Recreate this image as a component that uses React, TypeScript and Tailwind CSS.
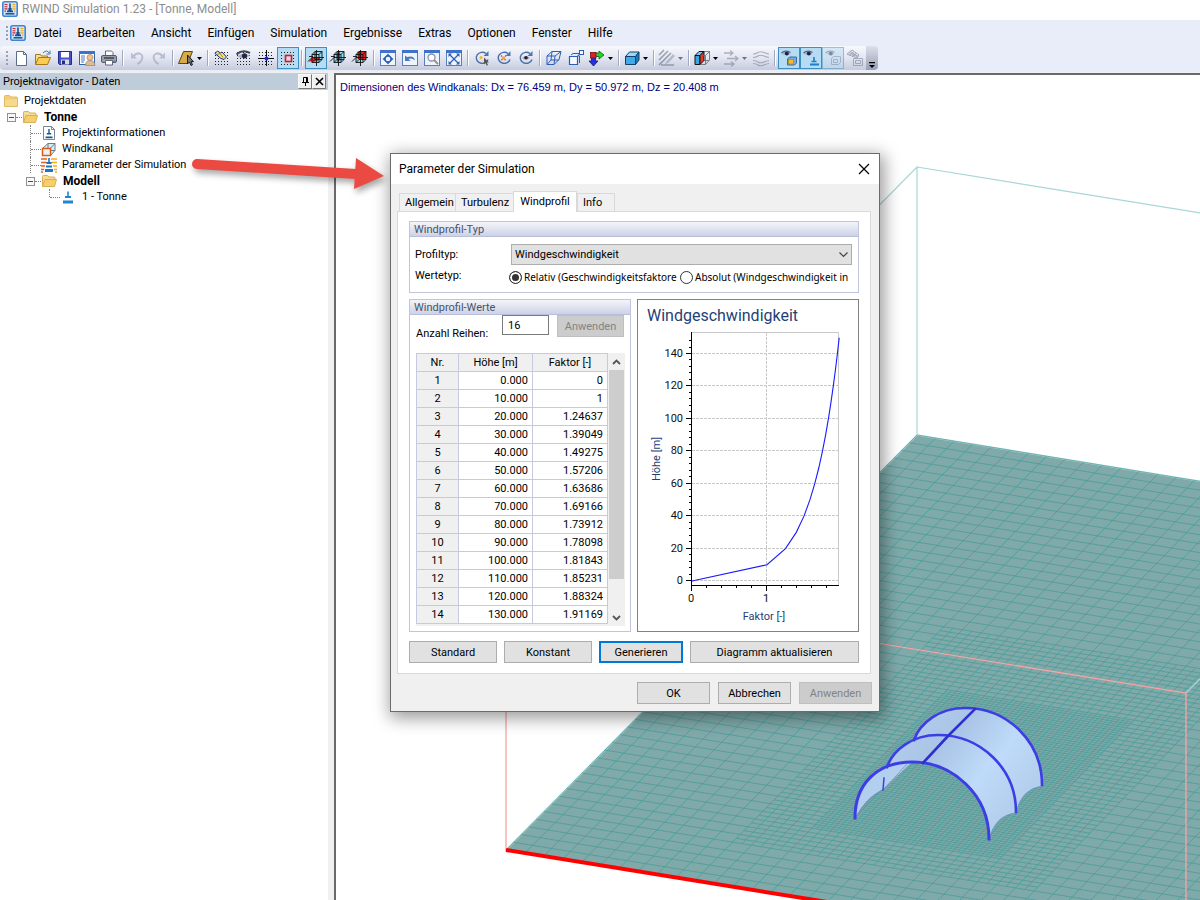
import React, { useState } from "react";
import clsx from "clsx";

const MENU = [
  "Datei",
  "Bearbeiten",
  "Ansicht",
  "Einfügen",
  "Simulation",
  "Ergebnisse",
  "Extras",
  "Optionen",
  "Fenster",
  "Hilfe",
];

const PROFILE: { height: number; factor: number }[] = [
  { height: 0, factor: 0 },
  { height: 10, factor: 1 },
  { height: 20, factor: 1.24637 },
  { height: 30, factor: 1.39049 },
  { height: 40, factor: 1.49275 },
  { height: 50, factor: 1.57206 },
  { height: 60, factor: 1.63686 },
  { height: 70, factor: 1.69166 },
  { height: 80, factor: 1.73912 },
  { height: 90, factor: 1.78098 },
  { height: 100, factor: 1.81843 },
  { height: 110, factor: 1.85231 },
  { height: 120, factor: 1.88324 },
  { height: 130, factor: 1.91169 },
  { height: 140, factor: 1.93807 },
  { height: 150, factor: 1.96265 },
];

const VISIBLE_ROWS = 14;

/* ---------- icons ---------- */

type IconProps = { children: React.ReactNode; className?: string };

const Icon = ({ children, className }: IconProps) => (
  <svg
    viewBox="0 0 18 18"
    fill="none"
    aria-hidden="true"
    className={clsx("h-[18px] w-[18px] shrink-0", className)}
  >
    {children}
  </svg>
);

const AppLogo = () => (
  <svg viewBox="0 0 16 16" fill="none" aria-hidden="true" className="h-4 w-4 shrink-0">
    <rect x=".8" y=".8" width="14.400" height="14.400" rx="2" fill="#cfe6fa" stroke="#3f86d2" strokeWidth="1.600" />
    <path d="M2.500 3.500h3M2.500 5.700h3M2.500 7.900h3M2.500 10.100h1.500" stroke="#d8232a" strokeWidth="1.100" />
    <path d="M10.500 3.500h3M10.500 5.700h3M10.500 7.900h3M12 10.100h1.500" stroke="#f0a81c" strokeWidth="1.100" />
    <path d="M7.200 2.500h1.600v4.500h.8v2.500h1.400v1.800h-6v-1.800h1.400v-2.500h.8z" fill="#1b4f8c" />
    <path d="M3.500 12.800h9" stroke="#1b4f8c" strokeWidth="1.500" />
  </svg>
);

const FolderClosed = () => (
  <svg viewBox="0 0 16 16" className="h-4 w-4 shrink-0" aria-hidden="true">
    <path d="M1.500 3.500q0-1 1-1h4l1.500 1.500h5.500q1 0 1 1v8.500h-13z" fill="#f0cf76" stroke="#e0bb62" />
    <path d="M2 6.500h12v6.500h-12z" fill="#f5d98c" />
  </svg>
);

const FolderOpen = () => (
  <svg viewBox="0 0 16 16" className="h-4 w-4 shrink-0" aria-hidden="true">
    <path d="M1.500 13.500v-10q0-1 1-1h4l1.500 1.500h5q1 0 1 1v2" fill="#f3dc96" stroke="#d8b055" />
    <path d="M1.500 13.500l2.500-7h11.500l-2 7z" fill="#f6cf6a" stroke="#d8b055" />
  </svg>
);

const Dots = () => (
  <path d="M2 3.500h15M2 6.500h15M2 9.500h15M2 12.500h15M2 15.500h15" stroke="#222" strokeDasharray="1 2" />
);

const CubeCross = ({ part }: { part: "floor" | "side" | "back" }) => (
  <Icon>
    <path d="M5 5.500l3-3h7v8l-3 3h-7z" fill="#8fdcf5" />
    {part === "floor" && <path d="M1.500 12.500l4-4h8l-3.500 4z" fill="#ee1c1c" />}
    {part === "side" && <path d="M8 4.500l3-2.500v9l-3 3z" fill="#ee1c1c" />}
    {part === "back" && <path d="M6.500 2.500h8.500v7.500h-8.500z" fill="#ee1c1c" />}
    <path
      d="M5 5.500l3-3h7v8l-3 3h-7zM5 5.500h7v8M12 5.500l3-3M8 2.500v8h7M8 10.500l-3 3"
      stroke="#111"
      strokeWidth=".9"
    />
    <path d="M1 12.500l4-4h12M9.500 1v16M2 7.500h4" stroke="#111" strokeWidth=".9" />
  </Icon>
);

const WindowFrame = ({ children }: { children: React.ReactNode }) => (
  <Icon>
    <rect x="1.500" y="1.500" width="15" height="15" fill="#eef4fd" stroke="#5a7fb8" />
    <path d="M1 2.500h16" stroke="#3f72c8" strokeWidth="3" />
    {children}
  </Icon>
);

const Rotate = ({ children }: { children: React.ReactNode }) => (
  <Icon>
    <path d="M13 4.500a6 5.500 0 1 0 2 6" stroke="#4a6fa8" strokeWidth="1.400" />
    <path d="M15.500 2v5h-5z" fill="#4a76b8" />
    {children}
  </Icon>
);

const Eye = () => (
  <>
    <path d="M1.500 5q4.500-4 9.500 0q-4.500 2-9.500 0z" fill="#aeb6cc" />
    <circle cx="6.800" cy="4.600" r="2" fill="#1d2350" />
    <path d="M1.500 4q4-3.500 9-.5" stroke="#5a627a" strokeWidth="1.200" />
  </>
);

/* ---------- toolbar ---------- */

type ToolProps = {
  label: string;
  active?: boolean;
  disabled?: boolean;
  menu?: boolean;
  children: React.ReactNode;
};

const Tool = ({ label, active, disabled, menu, children }: ToolProps) => (
  <button
    type="button"
    aria-label={label}
    title={label}
    disabled={disabled}
    className={clsx(
      "flex h-[22px] shrink-0 items-center",
      menu ? "w-[29px] justify-start pl-px" : "w-[22px] justify-center",
      active && "border border-[#3c8fc0] bg-[#b5dcf2]",
      disabled && "opacity-50"
    )}
  >
    {children}
    {menu && (
      <svg viewBox="0 0 5 3" className="ml-0.5 h-[3px] w-[5px] shrink-0" aria-hidden="true">
        <path d="M0 0h5l-2.500 3z" fill="#000" />
      </svg>
    )}
  </button>
);

const Separator = () => (
  <span className="mx-0.5 h-4 w-0.5 shrink-0 border-r border-white bg-[#a3a9bc]" />
);

const Grip = () => (
  <span className="ml-[6px] mr-[2px] h-[14px] w-0.5 shrink-0 bg-[repeating-linear-gradient(#9aa0b4_0_2px,transparent_2px_4px)]" />
);

const Toolbar = () => (
  <div className="flex h-[26px] items-start bg-[#e9ecf9]">
    <div className="flex h-6 items-center rounded-l bg-linear-to-b from-[#f7f8fd] via-[#e3e6f2] to-[#c6cbdd]">
      <Grip />
      <Tool label="Neu">
        <Icon>
          <path d="M4.500 2.500h7l3 3v11h-10z" fill="#fff" stroke="#5b6c88" />
          <path d="M11.500 2.500v3h3" stroke="#5b6c88" />
        </Icon>
      </Tool>
      <Tool label="Öffnen">
        <Icon>
          <path d="M1.500 15V5.500h5l1 1.500h6v2" fill="#f8e08c" stroke="#a5781c" />
          <path d="M1.500 15.500l3-7h12l-3 7z" fill="#f9cd52" stroke="#a5781c" />
          <path d="M9 4q4-4 6 0M16 1.500v3.500h-3.500" stroke="#48709f" />
        </Icon>
      </Tool>
      <Tool label="Speichern">
        <Icon>
          <path d="M2.500 2.500h13v13h-12l-1-1z" fill="#4653c4" stroke="#242c86" />
          <rect x="5" y="3" width="8" height="5.500" fill="#fff" />
          <rect x="5" y="10.500" width="8" height="5" fill="#d5d9ea" />
          <rect x="6" y="11.500" width="3" height="3.500" fill="#242c86" />
        </Icon>
      </Tool>
      <Tool label="Projekt">
        <Icon>
          <rect x="1.500" y="2.500" width="15" height="13" fill="#fff" stroke="#3464a8" />
          <path d="M1 3.500h16" stroke="#3873cf" strokeWidth="3" />
          <path d="M3 7h4M3 9h4M3 11h4M3 13h3" stroke="#4a7bc1" />
          <circle cx="12" cy="8.500" r="3" fill="#f3c28c" stroke="#b67b3a" strokeWidth=".7" />
          <path d="M7.500 16.500q0-5 4.500-5t5 5z" fill="#e6b98a" stroke="#8a8f9c" strokeWidth=".8" />
        </Icon>
      </Tool>
      <Tool label="Drucken">
        <Icon>
          <path d="M5.500 7V2h6l1.500 1.500V7" fill="#fff" stroke="#667" />
          <rect x="1.500" y="6.500" width="15" height="7" rx="1.500" fill="#9aa0aa" stroke="#555c68" />
          <path d="M4 9h10" stroke="#3d434e" strokeWidth="1.500" />
          <path d="M5.500 11.500h7v4.500h-7z" fill="#fff" stroke="#667" />
          <path d="M13 12.500h2.500" stroke="#3b8fe0" strokeWidth="1.500" />
        </Icon>
      </Tool>
      <Separator />
      <Tool label="Rückgängig" disabled>
        <Icon>
          <path d="M5 7.500q4-4.500 7.500-2.500t.5 7q-1.500 2-3.500 3" stroke="#8c95ab" strokeWidth="2" />
          <path d="M3 3.500v6h6z" fill="#8c95ab" />
        </Icon>
      </Tool>
      <Tool label="Wiederholen" disabled>
        <Icon>
          <path d="M13 7.500q-4-4.500-7.500-2.500t-.5 7q1.500 2 3.500 3" stroke="#8c95ab" strokeWidth="2" />
          <path d="M15 3.500v6h-6z" fill="#8c95ab" />
        </Icon>
      </Tool>
      <Separator />
      <Tool label="Auswahl" menu>
        <Icon>
          <path d="M1.500 14.500l5-12h9l-5 12z" fill="#d8ab45" stroke="#5e4513" />
          <path d="M10.500 6v9l2-2 1.500 3.500 1.500-.8-1.500-3h2.500z" fill="#777" stroke="#111" strokeWidth=".9" />
        </Icon>
      </Tool>
      <Separator />
      <Tool label="Arbeitsebene">
        <Icon>
          <Dots />
          <path d="M2 4.500l2.500-2.500 3 2 1.500-1 4.500 5-2.500 2.500-3-1-3-2.500z" fill="#f3e27a" stroke="#1c2e8c" />
          <path d="M4 5.500l3-1 3 4" stroke="#a5901c" />
        </Icon>
      </Tool>
      <Tool label="Raster anzeigen">
        <Icon>
          <Dots />
          <path d="M2 7.500q5-5 13-1q-6 5-13 1z" fill="#a9aebb" />
          <circle cx="9.500" cy="6.800" r="2.600" fill="#20254a" />
          <path d="M1.500 5.500q6-5.500 13.500-1.500" stroke="#444a58" strokeWidth="2" />
        </Icon>
      </Tool>
      <Tool label="Ursprung">
        <Icon>
          <Dots />
          <path d="M9.500 1v16M1 9.500h16" stroke="#111" />
          <circle cx="9.500" cy="9.500" r="2" fill="#1726ee" />
        </Icon>
      </Tool>
      <Tool label="Fang" active>
        <Icon>
          <Dots />
          <rect x="5" y="5" width="9" height="9" fill="#b5dcf2" />
          <rect x="6.500" y="6.500" width="6" height="6" fill="#d9d9f0" stroke="#ee1111" strokeWidth="1.600" />
        </Icon>
      </Tool>
      <Separator />
      <Tool label="Ebene XY" active>
        <CubeCross part="floor" />
      </Tool>
      <Tool label="Ebene YZ">
        <CubeCross part="side" />
      </Tool>
      <Tool label="Ebene XZ">
        <CubeCross part="back" />
      </Tool>
      <Separator />
      <Tool label="Ansicht verschieben">
        <WindowFrame>
          <circle cx="9" cy="10" r="3" stroke="#2c5fb4" strokeWidth="1.400" />
          <path d="M9 4.500l2 2.500h-4zM9 15.500l2-2.500h-4zM3.500 10l2.500-2v4zM14.500 10l-2.500-2v4z" fill="#2c5fb4" />
        </WindowFrame>
      </Tool>
      <Tool label="Vorherige Ansicht">
        <WindowFrame>
          <path d="M4 6.500v5.500h5.500l-2-2q3.500-1.500 6.500 1.500q-1-5.500-8-3.500z" fill="#4c79c0" />
        </WindowFrame>
      </Tool>
      <Tool label="Zoom">
        <WindowFrame>
          <circle cx="8.500" cy="8.500" r="3.500" fill="#fff" stroke="#8393ab" strokeWidth="1.300" />
          <path d="M11 11l4 4" stroke="#9a8f7a" strokeWidth="1.800" />
        </WindowFrame>
      </Tool>
      <Tool label="Alles anzeigen">
        <WindowFrame>
          <path d="M5 6l8 8M13 6l-8 8" stroke="#2c5fb4" strokeWidth="1.200" />
          <path d="M3.500 4.500h3.500l-3.500 3.500zM14.500 4.500h-3.500l3.500 3.500zM3.500 15.500h3.500l-3.500-3.500zM14.500 15.500h-3.500l3.500-3.500z" fill="#2c5fb4" />
        </WindowFrame>
      </Tool>
      <Separator />
      <Tool label="Drehen">
        <Rotate>
          <circle cx="8" cy="8.500" r="1.500" fill="#f2b91a" />
          <path d="M11 8.500v7l1.600-1.400 1.200 2.600 1.200-.6-1.200-2.600h2.200z" fill="#555" />
        </Rotate>
      </Tool>
      <Tool label="Um Punkt drehen">
        <Rotate>
          <path d="M6 6.500l5 5M11 6.500l-5 5" stroke="#e33" strokeWidth="1.200" strokeDasharray="1.500 1" />
          <circle cx="8.500" cy="9" r="1.500" fill="#f2a31a" />
        </Rotate>
      </Tool>
      <Tool label="Blickwinkel">
        <Rotate>
          <path d="M5 9q4-4 8 0q-4 3-8 0z" fill="#a4abba" />
          <circle cx="9" cy="8.800" r="1.800" fill="#223" />
        </Rotate>
      </Tool>
      <Separator />
      <Tool label="Isometrie">
        <Icon>
          <path d="M2 7l5-4.500h9l-2 8-5 5H2zM2 7h8l6-4.500M10 7l-1 8.500M7 2.500l-1 8.500-4 4.500M6 11h8" stroke="#2c5fb4" />
        </Icon>
      </Tool>
      <Tool label="Perspektive">
        <Icon>
          <path d="M2.500 7.500h8v8h-8zM10.500 7.500l3.500-3.500" fill="#f5f8fe" stroke="#2c5fb4" strokeWidth="1.200" />
          <rect x="12.500" y="1.500" width="4" height="4" fill="#f5f8fe" stroke="#2c5fb4" />
          <path d="M4 6l2-1.500h6M12.500 14v-7" stroke="#2c5fb4" />
        </Icon>
      </Tool>
      <Tool label="Achsen" menu>
        <Icon>
          <path d="M6 4h5v-2l5 4-5 4v-2.500h-5z" fill="#22d522" stroke="#0b5f0b" strokeWidth=".8" />
          <path d="M3.500 7h4v5h2.500l-4.500 5-4.500-5h2.500z" fill="#2330e8" stroke="#10156e" strokeWidth=".8" />
          <rect x="2.500" y="3.500" width="5.500" height="5.500" fill="#e02020" stroke="#701010" strokeWidth=".8" />
        </Icon>
      </Tool>
      <Separator />
      <Tool label="Volumen" menu>
        <Icon>
          <path d="M2.500 7.500l4-4.500h9.500l-3.500 4.500z" fill="#9bd8f8" stroke="#123f66" />
          <path d="M12.500 7.500l3.500-4.500v8l-3.500 4.500z" fill="#1d79b8" stroke="#123f66" />
          <path d="M2.500 7.500h10v8h-10z" fill="#40aae8" stroke="#123f66" />
        </Icon>
      </Tool>
      <Separator />
      <Tool label="Schraffur" menu disabled>
        <Icon>
          <path d="M1 6l5-5M1 11l9-9M1 16l12-12" stroke="#4d566b" strokeWidth="1.600" />
          <path d="M8 13l7-8 2 2-7 7-3 1z" fill="#888fa0" />
          <path d="M3 16h13" stroke="#4d566b" strokeWidth="1.400" />
        </Icon>
      </Tool>
      <Separator />
      <Tool label="Schnitt" menu>
        <Icon>
          <path d="M2 6.500l4-4h5l-4 4z" fill="#7fccf2" stroke="#111" />
          <path d="M2 6.500h5v9h-5z" fill="#3aa4e0" stroke="#111" />
          <path d="M7 6.500l4-4v9l-4 4z" fill="#e23b2e" stroke="#111" />
          <path d="M11 2.500h5.500v8.500l-4 4.500h-4.500M16.500 2.500l-4 4v9M12.500 6.500h-3M11 11.500h5" stroke="#666" strokeWidth=".8" />
        </Icon>
      </Tool>
      <Tool label="Vektoren" menu disabled>
        <Icon>
          <path d="M2 4h8M5 9.500h10M2 15h9M8 1.500l3 2.500-3 2.500M13 7l3 2.500-3 2.500M9 12.500l3 2.500-3 2.500" stroke="#6b7489" strokeWidth="1.300" />
        </Icon>
      </Tool>
      <Tool label="Stromlinien" disabled>
        <Icon>
          <path d="M1 5q3 0 5-1.500t6 0 5 1.500M1 8.500q3 0 5-1.500t6 0 5 1.500M1 11.500q3 0 5 1.500t6 0 5-1.500M1 14.500q3 0 5 1.500t6 0 5-1.500" stroke="#6b7489" strokeWidth="1.200" />
        </Icon>
      </Tool>
      <Separator />
      <Tool label="Modell anzeigen" active>
        <Icon>
          <Eye />
          <path d="M7.500 10l2-2h7v6l-2 2h-7z" fill="#7aa9d4" stroke="#3b6fa5" />
          <rect x="8.500" y="10.500" width="5" height="4.500" fill="#f6b927" stroke="#b7851a" strokeWidth=".7" />
        </Icon>
      </Tool>
      <Tool label="Gebäude anzeigen" active>
        <Icon>
          <Eye />
          <path d="M12 8v4M9.500 12.500h5" stroke="#1f7fc8" strokeWidth="1.600" />
          <path d="M8 15.500h9" stroke="#1f7fc8" strokeWidth="2" />
        </Icon>
      </Tool>
      <Tool label="Windkanal anzeigen" active disabled>
        <Icon>
          <Eye />
          <path d="M7.500 9.500l2-2h7v6l-2 2h-7zM9.500 10.500h4v3h-4z" stroke="#6f86a0" />
        </Icon>
      </Tool>
      <Tool label="Netz anzeigen" disabled>
        <Icon>
          <path d="M1 5l5-4 7 5-2 3zM3 3.500l8 4M4.500 2.500l7.500 5M3 6.500l5-4M6 7.500l4-3" stroke="#4d566b" strokeWidth=".9" />
          <path d="M7.500 9.500h9v7h-9zM9.500 11.500h5v3h-5z" stroke="#6b7489" />
        </Icon>
      </Tool>
    </div>
    <button
      type="button"
      aria-label="Symbolleiste anpassen"
      className="flex h-6 w-3 items-end justify-center rounded-r bg-linear-to-b from-[#dcdfeb] to-[#9aa0b6] pb-0.5"
    >
      <svg viewBox="0 0 6 6" className="h-[6px] w-[6px]" aria-hidden="true">
        <path d="M0 0h6v1.200h-6zM0 3h6l-3 3z" fill="#000" />
      </svg>
    </button>
  </div>
);

/* ---------- project navigator ---------- */

const HLine = ({ className }: { className: string }) => (
  <span className={clsx("h-px shrink-0 border-t border-dotted border-[#808080]", className)} />
);

const VLine = ({ className }: { className?: string }) => (
  <span className={clsx("w-px shrink-0 border-l border-dotted border-[#808080]", className ?? "h-4")} />
);

const Expander = () => (
  <button
    type="button"
    aria-label="Zuklappen"
    className="flex h-[9px] w-[9px] shrink-0 items-center justify-center border border-[#919191] bg-[#f8f8f8]"
  >
    <span className="h-px w-[5px] bg-[#2b4fa0]" />
  </button>
);

const PANEL_BUTTON =
  "flex h-[15px] w-[14px] items-center justify-center border border-[#f8f8f8] border-b-[#777] border-r-[#777] bg-[#f0f0f0]";

const Navigator = () => (
  <aside className="flex w-[328px] shrink-0 flex-col bg-white">
    <div className="flex h-[17px] items-center justify-between bg-[#bfcddb] pl-[3px] pr-0.5">
      <h2 className="pt-px">Projektnavigator - Daten</h2>
      <div className="flex">
        <button type="button" aria-label="Anheften" className={PANEL_BUTTON}>
          <svg viewBox="0 0 9 9" className="h-[9px] w-[9px]" fill="none" stroke="#000" aria-hidden="true">
            <path d="M2.500 .5h4v5M2.500 .5v5M1 5.500h7M4.500 5.500v3.500M5.500 1v4" />
          </svg>
        </button>
        <button type="button" aria-label="Schließen" className={PANEL_BUTTON}>
          <svg viewBox="0 0 9 9" className="h-[9px] w-[9px]" stroke="#000" strokeWidth="1.600" aria-hidden="true">
            <path d="M1 1l7 7M8 1l-7 7" />
          </svg>
        </button>
      </div>
    </div>

    <ul className="pt-[3px]">
      <li className="flex h-4 items-center gap-[5px] pl-[3px]">
        <FolderClosed />
        <span>Projektdaten</span>
      </li>
      <li className="flex h-4 items-center pl-[7px]">
        <Expander />
        <HLine className="w-[6px]" />
        <FolderOpen />
        <span className="pl-[6px] text-xs font-bold">Tonne</span>
      </li>
      <li className="flex h-4 items-center pl-[30px]">
        <VLine />
        <HLine className="w-[10px]" />
        <svg viewBox="0 0 16 16" className="h-4 w-4 shrink-0" aria-hidden="true">
          <path d="M2.500 1.500h8l3 3v10h-11z" fill="#fff" stroke="#7a8494" />
          <path d="M10.500 1.500v3h3" fill="none" stroke="#7a8494" />
          <path d="M7.300 4h1.400v4h1.500v1.500h-4.400v-1.500h1.500zM4.500 11.500h7v1.800h-7z" fill="#17568f" />
        </svg>
        <span className="pl-[5px]">Projektinformationen</span>
      </li>
      <li className="flex h-4 items-center pl-[30px]">
        <VLine />
        <HLine className="w-[10px]" />
        <svg viewBox="0 0 16 16" className="h-4 w-4 shrink-0" fill="none" aria-hidden="true">
          <path d="M2 7l5-4.500h7v7l-4.500 5z" fill="#d5eef2" stroke="#6f7b86" />
          <path d="M9.500 7l4.500-4.500M7 2.500v5M9.500 9.500h4.500" stroke="#6f7b86" />
          <rect x="1.500" y="7.500" width="8" height="7" fill="#e9f6f8" stroke="#e0591b" strokeWidth="1.500" />
        </svg>
        <span className="pl-[5px]">Windkanal</span>
      </li>
      <li className="flex h-4 items-center pl-[30px]">
        <VLine />
        <HLine className="w-[10px]" />
        <svg viewBox="0 0 16 16" className="h-4 w-4 shrink-0" aria-hidden="true">
          <path d="M0 2h6M0 5.500h6M0 9h4M0 12.500h3M0 15h2" stroke="#ea5b1d" strokeWidth="1.700" />
          <path d="M10 2h6M10 5.500h6M12 9h4M13 12.500h3M14 15h2" stroke="#efae1f" strokeWidth="1.700" />
          <path d="M7.200 1h1.600v4h1.700v2h-5v-2h1.700zM5 8.500h6v2h-6zM4 12h8v3h-8z" fill="#1c77c0" />
        </svg>
        <span className="pl-[5px]">Parameter der Simulation</span>
      </li>
      <li className="flex h-4 items-center pl-[26px]">
        <Expander />
        <HLine className="w-[6px]" />
        <FolderOpen />
        <span className="pl-[6px] text-xs font-bold">Modell</span>
      </li>
      <li className="flex h-4 items-center pl-[49px]">
        <VLine className="h-2 self-start" />
        <HLine className="w-[10px]" />
        <svg viewBox="0 0 16 16" className="h-4 w-4 shrink-0" aria-hidden="true">
          <path d="M7.200 2.500h1.600v4.500h2.200v2h-6v-2h2.200zM3 11.500h10v3h-10z" fill="#1f86cf" />
        </svg>
        <span className="pl-[6px]">1 - Tonne</span>
      </li>
    </ul>
  </aside>
);

/* ---------- 3D scene ---------- */

// floor corners: front left, front right, back right, back left
const FLOOR = {
  fl: [506, 850],
  fr: [1186, 960],
  br: [1583, 544],
  bl: [917, 435],
};

const project = (u: number, v: number) =>
  [0, 1].map(
    (i) =>
      (1 - u) * (1 - v) * FLOOR.fl[i] +
      u * (1 - v) * FLOOR.fr[i] +
      u * v * FLOOR.br[i] +
      (1 - u) * v * FLOOR.bl[i]
  );

const NX = 36;
const NY = 54;

// grid lines of a block of cells, each cell split into `div` parts
const gridPath = (x0: number, x1: number, y0: number, y1: number, div: number) => {
  const parts: string[] = [];
  const line = (a: number[], b: number[]) =>
    parts.push(`M${a[0].toFixed(1)} ${a[1].toFixed(1)}L${b[0].toFixed(1)} ${b[1].toFixed(1)}`);
  for (let i = x0 * div; i <= x1 * div; i++) {
    if (div > 1 && i % 2 === 0) continue;
    line(project(i / div / NX, y0 / NY), project(i / div / NX, y1 / NY));
  }
  for (let j = y0 * div; j <= y1 * div; j++) {
    if (div > 1 && j % 2 === 0) continue;
    line(project(x0 / NX, j / div / NY), project(x1 / NX, j / div / NY));
  }
  return parts.join("");
};

const Scene = () => (
  <svg className="absolute inset-0 h-full w-full" aria-label="Windkanal mit Modell Tonne">
    <defs>
      <linearGradient id="shell" x1="0" y1="0" x2="1" y2="0.6">
        <stop offset="0" stopColor="#b4cdec" />
        <stop offset="0.35" stopColor="#a9c4e6" />
        <stop offset="0.7" stopColor="#bedbf9" />
        <stop offset="1" stopColor="#b4cfee" />
      </linearGradient>
    </defs>
    <g transform="translate(-336 -75)" fill="none">
      <path d="M506 850L1186 960L1583 544L917 435z" fill="#80a9a9" stroke="#b5dcdc" strokeWidth="1.500" />
      <g stroke="#3f9a96" strokeOpacity="0.65">
        <path d={gridPath(0, NX, 0, NY, 1)} />
        <path d={gridPath(10, 26, 5, 33, 2)} />
        <path d={gridPath(13, 23, 8, 26, 4)} strokeOpacity="0.5" />
      </g>

      <path d="M506 583L917 167V435M917 167L1583 275M1186 693L1583 290" stroke="#a9d6d6" strokeWidth="1.200" />
      <path d="M506 850V583L1186 693V960" stroke="#f6a5a5" strokeWidth="1.300" />
      <path d="M506 850L1186 960" stroke="#ff0000" strokeWidth="4" />

      {/* back bay */}
      <path
        d="M914 740C920 723 939 708 965 708C1007 708 1042 741 1042 786Q1021 789 1016 813C1016 768 980 735 938 735Q925 735 914 740z"
        fill="url(#shell)"
      />
      {/* front bay, outer and inner face */}
      <path
        d="M887 767C893 750 912 735 938 735C980 735 1016 768 1016 813Q995 815 989 840C989 795 953 762 912 762Q898 762 887 767z"
        fill="url(#shell)"
      />
      <path d="M855 818C855 785 876 762 912 762L883 789Q866 797 855 818z" fill="#b3cff0" />
      <path d="M907 764L884 789M882 791Q866 798 856 817M989 840Q995 815 1016 813M1016 813Q1021 789 1042 786" stroke="#6d8fc0" strokeWidth=".8" />
      <g stroke="#3d3de6" strokeWidth="2.600" strokeLinecap="square">
        <path d="M914 740C920 723 939 708 965 708C1007 708 1042 741 1042 785" />
        <path d="M887 767C893 750 912 735 938 735C980 735 1016 768 1016 812" />
        <path d="M855 818C855 785 876 762 912 762C953 762 989 795 989 839" strokeWidth="3" />
        <path d="M923 763L948 736L975 709" stroke="#2f2fd0" />
        <path d="M883 790L884 778" strokeWidth="1.500" />
      </g>
    </g>
  </svg>
);

/* ---------- dialog ---------- */

const BUTTON =
  "flex h-[22px] items-center justify-center border border-[#adadad] bg-[#e1e1e1] pt-px disabled:border-[#bfbfbf] disabled:bg-[#cccccc] disabled:text-[#838383]";

const GroupTitle = ({ children }: { children: React.ReactNode }) => (
  <legend className="float-left flex h-[15px] w-full items-center border-b border-[#b9bedb] bg-linear-to-b from-[#f4f5fa] to-[#cdd2e6] pl-1 pt-px text-[#4a5468]">
    {children}
  </legend>
);

const WindChart = () => {
  const x = (f: number) => 54 + f * 75;
  const y = (h: number) => 281 - h * (227 / 140);
  const major = [0, 20, 40, 60, 80, 100, 120, 140];
  const minor = Array.from({ length: 38 }, (_, i) => i * 4);
  const points = PROFILE.map((p) => `${x(p.factor)},${y(p.height)}`).join(" ");

  return (
    <svg viewBox="0 0 220 331" className="h-[331px] w-[220px]" aria-label="Windgeschwindigkeit">
      <text x="9" y="21" fontSize="16" fill="#1f3f77">
        Windgeschwindigkeit
      </text>
      <path d="M53.500 32.500H200.500V286" fill="none" stroke="#c8c8c8" />
      {major.map((h) => (
        <path key={h} d={`M54 ${Math.round(y(h)) - 0.5}H200`} stroke="#c8c8c8" strokeDasharray="3 1" />
      ))}
      <path d="M128.500 33V285" stroke="#c8c8c8" strokeDasharray="3 1" />
      {minor.map((h) => (
        <path key={h} d={`M51 ${Math.round(y(h)) - 0.5}H54`} stroke="#000" />
      ))}
      {major.map((h) => (
        <g key={h}>
          <path d={`M48 ${Math.round(y(h)) - 0.5}H54`} stroke="#000" />
          <text x="45" y={Math.round(y(h)) + 3} fontSize="11" textAnchor="end" fill="#111">
            {h}
          </text>
        </g>
      ))}
      {[0.2, 0.4, 0.6, 0.8, 1.2, 1.4, 1.6, 1.8].map((f) => (
        <path key={f} d={`M${Math.round(x(f)) - 0.5} 286V288`} stroke="#000" />
      ))}
      {[0, 1].map((f) => (
        <g key={f}>
          <path d={`M${x(f) - 0.5} 286V291`} stroke="#000" />
          <text x={x(f) - 1} y="302" fontSize="11" textAnchor="middle" fill="#111">
            {f}
          </text>
        </g>
      ))}
      <path d="M53.500 32V286M53 285.500H201" fill="none" stroke="#000" />
      <polyline points={points} fill="none" stroke="#1a1aff" strokeWidth="1.100" />
      <text x="126" y="320" fontSize="11" textAnchor="middle" fill="#1f3f77">
        Faktor [-]
      </text>
      <text transform="translate(22 159) rotate(-90)" fontSize="11" textAnchor="middle" fill="#1f3f77">
        Höhe [m]
      </text>
    </svg>
  );
};

const ProfileTable = () => (
  <div className="ml-[6px] mt-4 flex h-[273px] w-[209px] bg-[#f0f0f0]">
    <table className="w-[192px] table-fixed border-collapse self-start border border-[#c5cae0] bg-white">
      <colgroup>
        <col className="w-[42px]" />
        <col className="w-[74px]" />
        <col />
      </colgroup>
      <thead>
        <tr className="h-[18px] bg-[#f0f0f0]">
          {["Nr.", "Höhe [m]", "Faktor [-]"].map((head) => (
            <th key={head} className="border border-[#c5cae0] p-0 text-center font-normal leading-4">
              {head}
            </th>
          ))}
        </tr>
      </thead>
      <tbody>
        {PROFILE.slice(0, VISIBLE_ROWS).map((row, index) => (
          <tr key={row.height} className="h-[18px]">
            <td className="border border-[#c5cae0] bg-[#f0f0f0] p-0 text-center leading-4">{index + 1}</td>
            <td className="border border-[#c5cae0] p-0 pr-1 text-right leading-4">{row.height.toFixed(3)}</td>
            <td className="border border-[#c5cae0] p-0 pr-1 text-right leading-4">{row.factor}</td>
          </tr>
        ))}
      </tbody>
    </table>
    <div className="flex w-4 flex-col items-center" aria-hidden="true">
      <svg viewBox="0 0 15 17" className="h-[17px] w-[15px]" fill="none" stroke="#555" strokeWidth="1.800">
        <path d="M4 11l3.500-3.500 3.500 3.500" />
      </svg>
      <div className="h-[209px] w-[15px] bg-[#cdcdcd]" />
      <svg viewBox="0 0 15 17" className="mt-auto h-[17px] w-[15px]" fill="none" stroke="#555" strokeWidth="1.800">
        <path d="M4 7l3.500 3.500 3.500-3.500" />
      </svg>
    </div>
  </div>
);

const TABS = [
  { label: "Allgemein", width: "w-[57px]" },
  { label: "Turbulenz", width: "w-[59px]" },
  { label: "Windprofil", width: "w-[64px]" },
  { label: "Info", width: "w-[38px]" },
];

const ParameterDialog = () => {
  const [rows, setRows] = useState("16");
  const [valueType, setValueType] = useState("relativ");
  const radio =
    "h-[13px] w-[13px] shrink-0 appearance-none rounded-full border border-[#333] bg-white checked:bg-[#333] checked:shadow-[inset_0_0_0_2px_white]";
  const radioLabel =
    "flex shrink-0 items-center gap-0.5 whitespace-nowrap pt-0.5 font-['Noto_Sans',sans-serif] text-[10px]";

  return (
    <section
      role="dialog"
      aria-label="Parameter der Simulation"
      className="absolute left-[54px] top-[78px] w-[490px] border border-[#6b6b6b] bg-[#f0f0f0] shadow-[2px_4px_16px_2px_rgba(0,0,0,0.4)]"
    >
      <header className="flex h-[30px] items-center justify-between bg-white pl-2 pr-[9px]">
        <h1 className="text-xs">Parameter der Simulation</h1>
        <button type="button" aria-label="Schließen">
          <svg viewBox="0 0 12 12" className="h-3 w-3" stroke="#000" strokeWidth="1.200" aria-hidden="true">
            <path d="M1 1l10 10M11 1l-10 10" />
          </svg>
        </button>
      </header>

      <div className="pb-[7px] pl-[6px] pr-[7px] pt-[7px]">
        <div role="tablist" className="flex items-end pl-0.5">
          {TABS.map((tab) => {
            const selected = tab.label === "Windprofil";
            return (
              <button
                key={tab.label}
                type="button"
                role="tab"
                aria-selected={selected}
                className={clsx(
                  "border border-b-0 border-[#d9d9d9]",
                  tab.width,
                  selected
                    ? "relative -mb-px h-[21px] bg-white pb-px text-center"
                    : "-mr-px h-[18px] pl-[5px] pt-px text-left"
                )}
              >
                {tab.label}
              </button>
            );
          })}
        </div>

        <div className="mr-px border border-[#d9d9d9] bg-white px-[11px] pb-[10px] pt-[9px]">
          <fieldset className="h-[72px] min-w-0 border border-[#c0c5dd]">
            <GroupTitle>Windprofil-Typ</GroupTitle>
            <div className="clear-both flex items-center pt-[7px]">
              <label htmlFor="profile-type" className="w-[101px] shrink-0 pl-[5px]">
                Profiltyp:
              </label>
              <div className="relative mr-[6px] flex-1">
                <select
                  id="profile-type"
                  className="block h-[21px] w-full appearance-none border border-[#adadad] bg-[#e1e1e1] pl-[3px] pt-px"
                >
                  <option>Windgeschwindigkeit</option>
                </select>
                <svg
                  viewBox="0 0 9 6"
                  className="pointer-events-none absolute right-1 top-2 h-[6px] w-[9px]"
                  fill="none"
                  stroke="#444"
                  strokeWidth="1.200"
                  aria-hidden="true"
                >
                  <path d="M.5 .5l4 4 4-4" />
                </svg>
              </div>
            </div>
            <div className="flex h-[22px] items-center">
              <span className="w-[99px] shrink-0 pl-[5px]">Wertetyp:</span>
              <label className={clsx(radioLabel, "w-[171px]")}>
                <input
                  type="radio"
                  name="value-type"
                  className={radio}
                  checked={valueType === "relativ"}
                  onChange={() => setValueType("relativ")}
                />
                Relativ (Geschwindigkeitsfaktore
              </label>
              <label className={radioLabel}>
                <input
                  type="radio"
                  name="value-type"
                  className={radio}
                  checked={valueType === "absolut"}
                  onChange={() => setValueType("absolut")}
                />
                Absolut (Windgeschwindigkeit in
              </label>
            </div>
          </fieldset>

          <div className="mt-[6px] flex justify-between">
            <fieldset className="h-[333px] w-[222px] border border-[#c0c5dd]">
              <GroupTitle>Windprofil-Werte</GroupTitle>
              <div className="clear-both flex h-[22px] items-start pl-[6px]">
                <label htmlFor="row-count" className="w-[86px] pt-3 leading-[14px]">
                  Anzahl Reihen:
                </label>
                <input
                  id="row-count"
                  value={rows}
                  onChange={(e) => setRows(e.target.value)}
                  className="h-5 w-[47px] border border-[#7a7a7a] bg-white pl-[5px]"
                />
                <button type="button" disabled className={clsx(BUTTON, "ml-2 w-[67px]")}>
                  Anwenden
                </button>
              </div>
              <ProfileTable />
            </fieldset>
            <div className="border border-[#828282] bg-white">
              <WindChart />
            </div>
          </div>

          <div className="mt-[9px] flex justify-between">
            <button type="button" className={clsx(BUTTON, "w-[88px]")}>
              Standard
            </button>
            <button type="button" className={clsx(BUTTON, "w-[88px]")}>
              Konstant
            </button>
            <button type="button" className="flex h-[22px] w-[84px] items-center justify-center border-2 border-[#0078d7] bg-[#e1e1e1] pt-px">
              Generieren
            </button>
            <button type="button" className={clsx(BUTTON, "w-[169px]")}>
              Diagramm aktualisieren
            </button>
          </div>
        </div>

        <div className="mt-2 flex justify-end gap-2">
          <button type="button" className={clsx(BUTTON, "w-[73px]")}>
            OK
          </button>
          <button type="button" className={clsx(BUTTON, "w-[73px]")}>
            Abbrechen
          </button>
          <button type="button" disabled className={clsx(BUTTON, "w-[73px]")}>
            Anwenden
          </button>
        </div>
      </div>
    </section>
  );
};

const Arrow = () => (
  <svg
    viewBox="0 0 206 50"
    className="pointer-events-none absolute left-[186px] top-[76px] h-[50px] w-[206px] drop-shadow-[2px_4px_3px_rgba(0,0,0,0.35)]"
    aria-hidden="true"
  >
    <path d="M11 16L170 26" stroke="#ea4a42" strokeWidth="10" strokeLinecap="round" />
    <path d="M170 10L198 28L168 41z" fill="#ea4a42" />
  </svg>
);

const App = () => (
  <div className="flex h-screen min-h-[720px] flex-col overflow-hidden bg-[#f0f0f0] font-['Roboto','Noto_Sans',sans-serif] text-[11px] leading-4 text-black">
    <div className="flex h-5 shrink-0 items-center gap-1 bg-white pb-0.5 pl-0.5 text-xs text-[#8e8e8e]">
      <AppLogo />
      <span>RWIND Simulation 1.23 - [Tonne, Modell]</span>
    </div>

    <nav className="flex h-[26px] shrink-0 items-center bg-[#e9ecf9] text-xs">
      <Grip />
      <AppLogo />
      <div className="flex">
        {MENU.map((item) => (
          <button key={item} type="button" className="whitespace-nowrap px-2">
            {item}
          </button>
        ))}
      </div>
    </nav>

    <Toolbar />

    <div className="relative flex min-h-0 flex-1 pt-px">
      <Navigator />
      <main className="relative ml-[6px] min-w-0 flex-1 overflow-hidden border-l-2 border-t-2 border-[#696969] bg-white">
        <Scene />
        <p className="relative pl-1 pt-1 font-['Liberation_Sans',sans-serif] text-[#000080]">
          Dimensionen des Windkanals: Dx = 76.459 m, Dy = 50.972 m, Dz = 20.408 m
        </p>
        <ParameterDialog />
      </main>
      <Arrow />
    </div>
  </div>
);

export default App;
